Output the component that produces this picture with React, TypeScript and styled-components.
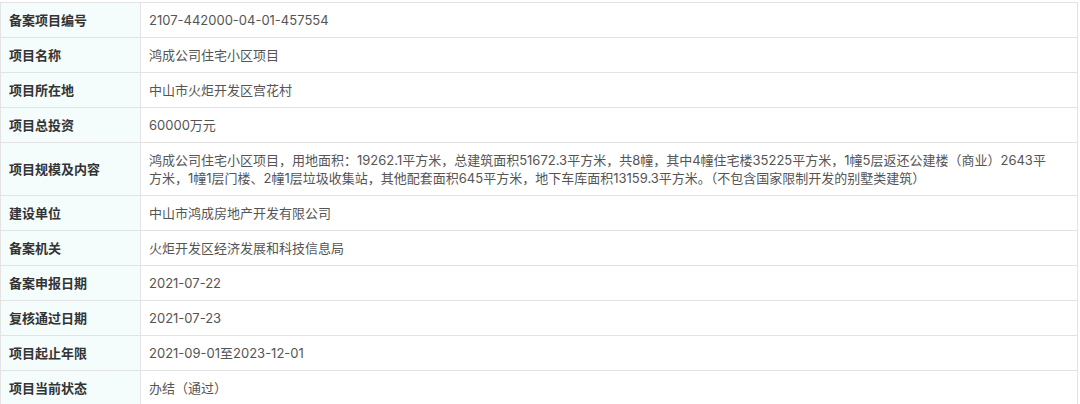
import styled, { createGlobalStyle } from "styled-components";

type Row = { label: string; value: string };

const rows: Row[] = [
  { label: "备案项目编号", value: "2107-442000-04-01-457554" },
  { label: "项目名称", value: "鸿成公司住宅小区项目" },
  { label: "项目所在地", value: "中山市火炬开发区宫花村" },
  { label: "项目总投资", value: "60000万元" },
  {
    label: "项目规模及内容",
    value:
      "鸿成公司住宅小区项目，用地面积：19262.1平方米，总建筑面积51672.3平方米，共8幢，其中4幢住宅楼35225平方米，1幢5层返还公建楼（商业）2643平方米，1幢1层门楼、2幢1层垃圾收集站，其他配套面积645平方米，地下车库面积13159.3平方米。（不包含国家限制开发的别墅类建筑）",
  },
  { label: "建设单位", value: "中山市鸿成房地产开发有限公司" },
  { label: "备案机关", value: "火炬开发区经济发展和科技信息局" },
  { label: "备案申报日期", value: "2021-07-22" },
  { label: "复核通过日期", value: "2021-07-23" },
  { label: "项目起止年限", value: "2021-09-01至2023-12-01" },
  { label: "项目当前状态", value: "办结（通过）" },
];

export default function App() {
  return (
    <>
      <GlobalStyle />
      <Page>
        <InfoTable>
          <tbody>
            {rows.map((row) => (
              <tr key={row.label}>
                <LabelCell>{row.label}</LabelCell>
                <ValueCell>{row.value}</ValueCell>
              </tr>
            ))}
          </tbody>
        </InfoTable>
      </Page>
    </>
  );
}

const GlobalStyle = createGlobalStyle`
  html, body {
    margin: 0;
    padding: 0;
    background: #ffffff;
  }
  body {
    font-family: Inter, "Noto Sans CJK SC", sans-serif;
  }
`;

const Page = styled.div`
  width: 1080px;
  padding: 2px 0 0 0;
  box-sizing: border-box;
`;

const InfoTable = styled.table`
  width: 1078px;
  border-collapse: collapse;
  table-layout: fixed;
  font-size: 13px;
`;

const LabelCell = styled.td`
  width: 123px;
  padding: 8px;
  border: 1px solid #e3e3e3;
  background-color: #f5fcfc;
  color: #333333;
  font-family: "Noto Sans CJK SC", sans-serif;
  font-weight: bold;
  line-height: 18px;
  vertical-align: middle;
`;

const ValueCell = styled.td`
  padding: 8px 26px 8px 8px;
  border: 1px solid #e3e3e3;
  background-color: #ffffff;
  color: #555555;
  line-height: 18px;
  vertical-align: middle;
`;
